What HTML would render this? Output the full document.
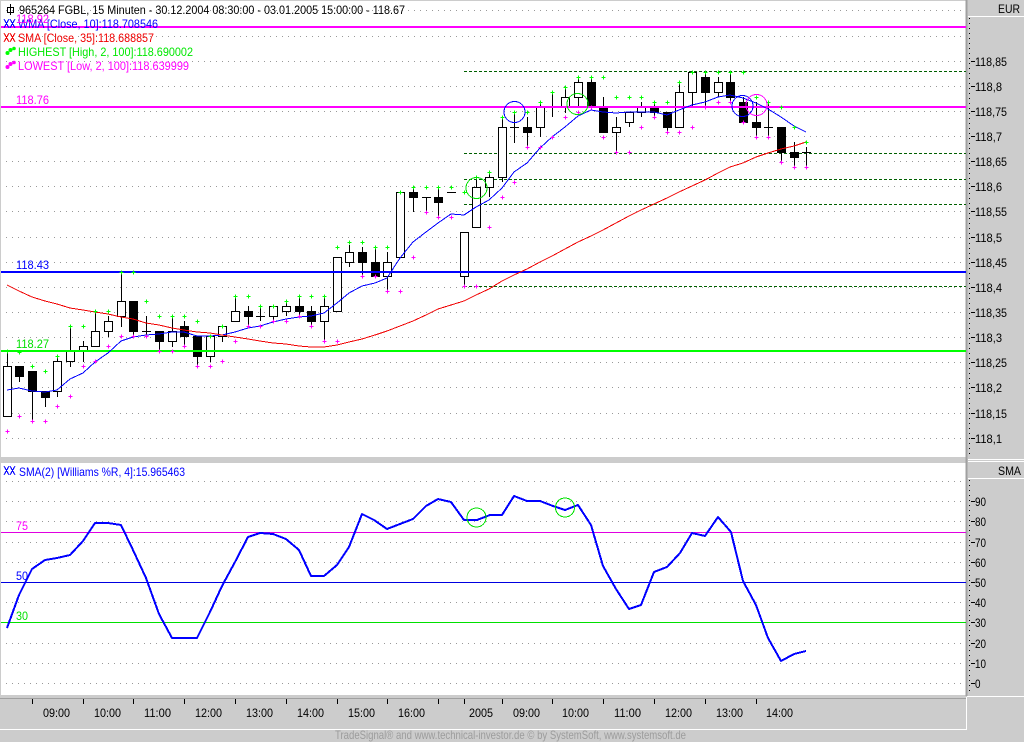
<!DOCTYPE html>
<html><head><meta charset="utf-8"><title>FGBL 15 Minuten</title>
<style>
html,body{margin:0;padding:0;background:#ccc;width:1024px;height:742px;overflow:hidden}
svg{display:block}
text{font-family:"Liberation Sans",sans-serif;font-size:12px}
.ax text{fill:#000}
</style></head><body>
<svg width="1024" height="742" viewBox="0 0 1024 742" xmlns="http://www.w3.org/2000/svg">
<rect width="1024" height="742" fill="#ccc"/>
<rect x="1" y="1" width="965" height="456" fill="#fff"/>
<rect x="1" y="463" width="965" height="232" fill="#fff"/>
<g shape-rendering="crispEdges">
<!-- frame -->
<path d="M966.5 0V696" stroke="#a0a0a0" stroke-width="2" fill="none"/>
<path d="M968 16.5H1024M968 459.5H1024M968 461.5H1024M968 478.5H1024M967 696.5H1024M0 729.5H967M966.5 697V729" stroke="#fff" fill="none"/>
<path d="M0 698.5H966" stroke="#a0a0a0" fill="none"/>
<!-- grid -->
<path stroke="#999" stroke-dasharray="1 5" fill="none" d="M6 10.5H966M6 36.5H966M6 61.5H966M6 86.5H966M6 111.5H966M6 136.5H966M6 161.5H966M6 186.5H966M6 211.5H966M6 237.5H966M6 262.5H966M6 287.5H966M6 312.5H966M6 337.5H966M6 362.5H966M6 387.5H966M6 413.5H966M6 438.5H966M6 481.5H966M6 501.5H966M6 521.5H966M6 542.5H966M6 562.5H966M6 582.5H966M6 602.5H966M6 622.5H966M6 643.5H966M6 663.5H966M6 683.5H966"/>
<!-- dashed support -->
<path stroke="#006000" stroke-dasharray="3 2" fill="none" d="M464 71.5H966M464 153.5H966M464 179.5H966M464 204.5H966M464 286.5H966"/>
<!-- wicks -->
<path stroke="#000" fill="none" d="M7.5 352V366M19.5 366V382M32.5 371V421M45.5 391V407M57.5 357V397M70.5 326V367M83.5 341V362M95.5 311V346M108.5 316V337M121.5 272V327M133.5 301V336M146.5 316V336M142 331.5H151M159.5 331V351M172.5 316V347M184.5 321V347M197.5 336V366M210.5 336V362M222.5 326V342M235.5 296V321M248.5 306V326M260.5 306V321M256 316.5H265M273.5 306V321M286.5 301V316M299.5 296V316M311.5 306V326M324.5 296V341M337.5 257V311M349.5 245V267M362.5 247V277M375.5 247V276M387.5 252V291M400.5 192V257M413.5 187V212M426.5 197V212M422 197.5H431M438.5 187V217M447 192.5H456M464.5 232V286M476.5 177V227M489.5 172V197M502.5 117V182M514.5 112V143M510 127.5H519M527.5 117V147M540.5 102V137M552.5 92V117M548 107.5H557M565.5 87V113M578.5 77V107M591.5 77V107M603.5 97V132M616.5 117V152M629.5 112V127M641.5 102V117M654.5 102V117M667.5 112V132M679.5 82V127M692.5 72V107M705.5 72V107M718.5 77V97M730.5 72V102M743.5 97V122M756.5 102V137M768.5 102V137M764 127.5H773M781.5 127V162M794.5 142V167M806.5 147V167M802 152.5H811"/>
<!-- white bodies -->
<path stroke="#000" fill="#fff" d="M3.5 366.5h8v50h-8zM53.5 361.5h8v30h-8zM66.5 351.5h8v10h-8zM79.5 346.5h8v5h-8zM91.5 331.5h8v15h-8zM104.5 321.5h8v10h-8zM117.5 301.5h8v15h-8zM168.5 331.5h8v10h-8zM206.5 336.5h8v20h-8zM218.5 326.5h8v10h-8zM231.5 311.5h8v10h-8zM269.5 306.5h8v10h-8zM282.5 306.5h8v5h-8zM320.5 306.5h8v15h-8zM333.5 257.5h8v54h-8zM345.5 252.5h8v10h-8zM383.5 262.5h8v14h-8zM396.5 192.5h8v65h-8zM460.5 232.5h8v44h-8zM472.5 187.5h8v40h-8zM485.5 177.5h8v10h-8zM498.5 127.5h8v50h-8zM536.5 107.5h8v20h-8zM561.5 97.5h8v10h-8zM574.5 82.5h8v15h-8zM612.5 127.5h8v5h-8zM625.5 112.5h8v10h-8zM637.5 107.5h8v5h-8zM675.5 92.5h8v35h-8zM688.5 72.5h8v20h-8zM714.5 82.5h8v10h-8z"/>
<!-- black bodies -->
<path stroke="#000" fill="#000" d="M15.5 366.5h8v10h-8zM28.5 371.5h8v20h-8zM41.5 391.5h8v6h-8zM129.5 301.5h8v30h-8zM155.5 331.5h8v10h-8zM180.5 326.5h8v10h-8zM193.5 336.5h8v20h-8zM244.5 311.5h8v5h-8zM295.5 306.5h8v5h-8zM307.5 311.5h8v10h-8zM358.5 252.5h8v10h-8zM371.5 262.5h8v14h-8zM409.5 192.5h8v5h-8zM434.5 197.5h8v5h-8zM523.5 127.5h8v5h-8zM587.5 82.5h8v25h-8zM599.5 107.5h8v25h-8zM650.5 107.5h8v5h-8zM663.5 112.5h8v15h-8zM701.5 77.5h8v15h-8zM726.5 82.5h8v15h-8zM739.5 102.5h8v20h-8zM752.5 122.5h8v5h-8zM777.5 127.5h8v25h-8zM790.5 152.5h8v5h-8z"/>
<!-- horizontal level lines -->
<path stroke="#ff00ff" stroke-width="2" fill="none" d="M1 27H966M1 107H966"/>
<path stroke="#0000ff" stroke-width="2" fill="none" d="M1 272H966"/>
<path stroke="#00ff00" stroke-width="2" fill="none" d="M1 351H966"/>
<path stroke="#e000e0" fill="none" d="M1 532.5H966"/>
<path stroke="#0000e0" fill="none" d="M1 582.5H966"/>
<path stroke="#00e000" fill="none" d="M1 622.5H966"/>
<!-- WMA -->
<polyline fill="none" stroke="#0000ff" points="7,390 19,388 32,391 45,392 57,390 70,379 83,373 95,362 108,353 121,341 133,337 146,335 159,334 172,332 184,332 197,336 210,336 222,335 235,332 248,328 260,326 273,322 286,319 299,317 311,316 324,313 337,303 349,293 362,286 375,283 387,278 400,258 413,242 426,232 438,223 451,214 464,215 476,207 489,200 502,188 514,172 527,163 540,148 552,137 565,127 578,116 591,110 603,112 616,113 629,112 641,112 654,112 667,115 679,110 692,105 705,102 718,97 730,95 743,98 756,103 768,109 781,117 794,126 806,132"/>
<!-- SMA -->
<polyline fill="none" stroke="#f00000" points="7,285 19,291 32,297 45,301 57,304 70,308 83,310 95,312 108,314 121,317 133,319 146,323 159,325 172,328 184,330 197,332 210,333 222,335 235,337 248,339 260,341 273,343 286,344 299,346 311,347 324,347 337,345 349,342 362,339 375,335 387,331 400,326 413,321 426,315 438,309 451,305 464,301 476,295 489,289 502,281 514,275 527,269 540,262 552,256 565,249 578,242 591,236 603,230 616,223 629,216 641,210 654,204 667,198 679,192 692,186 705,180 718,173 730,167 743,163 756,157 768,153 781,149 794,146 806,142"/>
<!-- markers -->
<path stroke="#00ff00" stroke-linecap="square" fill="none" d="M6 351.5h3M7.5 350v3M18 352.5h3M19.5 351v3M31 366.5h3M32.5 365v3M44 371.5h3M45.5 370v3M56 356.5h3M57.5 355v3M69 326.5h3M70.5 325v3M82 326.5h3M83.5 325v3M94 311.5h3M95.5 310v3M107 311.5h3M108.5 310v3M120 272.5h3M121.5 271v3M132 272.5h3M133.5 271v3M145 301.5h3M146.5 300v3M158 316.5h3M159.5 315v3M171 316.5h3M172.5 315v3M183 316.5h3M184.5 315v3M196 321.5h3M197.5 320v3M209 336.5h3M210.5 335v3M221 326.5h3M222.5 325v3M234 296.5h3M235.5 295v3M247 296.5h3M248.5 295v3M259 306.5h3M260.5 305v3M272 306.5h3M273.5 305v3M285 301.5h3M286.5 300v3M298 296.5h3M299.5 295v3M310 296.5h3M311.5 295v3M323 296.5h3M324.5 295v3M336 247.5h3M337.5 246v3M348 242.5h3M349.5 241v3M361 242.5h3M362.5 241v3M374 247.5h3M375.5 246v3M386 247.5h3M387.5 246v3M399 192.5h3M400.5 191v3M412 187.5h3M413.5 186v3M425 187.5h3M426.5 186v3M437 187.5h3M438.5 186v3M450 187.5h3M451.5 186v3M463 192.5h3M464.5 191v3M475 177.5h3M476.5 176v3M488 172.5h3M489.5 171v3M501 117.5h3M502.5 116v3M513 112.5h3M514.5 111v3M526 112.5h3M527.5 111v3M539 102.5h3M540.5 101v3M551 92.5h3M552.5 91v3M564 87.5h3M565.5 86v3M577 77.5h3M578.5 76v3M590 77.5h3M591.5 76v3M602 77.5h3M603.5 76v3M615 97.5h3M616.5 96v3M628 97.5h3M629.5 96v3M640 97.5h3M641.5 96v3M653 102.5h3M654.5 101v3M666 102.5h3M667.5 101v3M678 82.5h3M679.5 81v3M691 72.5h3M692.5 71v3M704 72.5h3M705.5 71v3M717 72.5h3M718.5 71v3M729 72.5h3M730.5 71v3M742 72.5h3M743.5 71v3M755 97.5h3M756.5 96v3M767 102.5h3M768.5 101v3M780 107.5h3M781.5 106v3M793 127.5h3M794.5 126v3M805 142.5h3M806.5 141v3"/>
<path stroke="#ff00ff" stroke-linecap="square" fill="none" d="M6 431.5h3M7.5 430v3M18 416.5h3M19.5 415v3M31 421.5h3M32.5 420v3M44 421.5h3M45.5 420v3M56 406.5h3M57.5 405v3M69 396.5h3M70.5 395v3M82 366.5h3M83.5 365v3M94 361.5h3M95.5 360v3M107 346.5h3M108.5 345v3M120 336.5h3M121.5 335v3M132 336.5h3M133.5 335v3M145 336.5h3M146.5 335v3M158 351.5h3M159.5 350v3M171 351.5h3M172.5 350v3M183 346.5h3M184.5 345v3M196 366.5h3M197.5 365v3M209 366.5h3M210.5 365v3M221 361.5h3M222.5 360v3M234 341.5h3M235.5 340v3M247 326.5h3M248.5 325v3M259 326.5h3M260.5 325v3M272 321.5h3M273.5 320v3M285 321.5h3M286.5 320v3M298 316.5h3M299.5 315v3M310 326.5h3M311.5 325v3M323 341.5h3M324.5 340v3M336 341.5h3M337.5 340v3M361 276.5h3M362.5 275v3M374 276.5h3M375.5 275v3M386 291.5h3M387.5 290v3M399 291.5h3M400.5 290v3M412 257.5h3M413.5 256v3M425 212.5h3M426.5 211v3M437 217.5h3M438.5 216v3M450 217.5h3M451.5 216v3M463 286.5h3M464.5 285v3M475 286.5h3M476.5 285v3M488 227.5h3M489.5 226v3M501 197.5h3M502.5 196v3M513 182.5h3M514.5 181v3M526 147.5h3M527.5 146v3M539 147.5h3M540.5 146v3M551 137.5h3M552.5 136v3M564 117.5h3M565.5 116v3M577 112.5h3M578.5 111v3M590 107.5h3M591.5 106v3M602 137.5h3M603.5 136v3M615 152.5h3M616.5 151v3M628 152.5h3M629.5 151v3M640 127.5h3M641.5 126v3M653 117.5h3M654.5 116v3M666 132.5h3M667.5 131v3M678 132.5h3M679.5 131v3M691 127.5h3M692.5 126v3M704 107.5h3M705.5 106v3M717 102.5h3M718.5 101v3M729 102.5h3M730.5 101v3M742 122.5h3M743.5 121v3M755 137.5h3M756.5 136v3M767 137.5h3M768.5 136v3M780 162.5h3M781.5 161v3M793 167.5h3M794.5 166v3M805 167.5h3M806.5 166v3"/>
<!-- Williams -->
<polyline fill="none" stroke="#0000ff" stroke-width="2" stroke-linejoin="round" points="7,628 19,595 32,569 45,560 57,558 70,555 83,541 95,523 108,523 121,525 133,550 146,578 159,614 172,638 184,638 197,638 210,612 222,586 235,562 248,537 260,533 273,534 286,539 299,550 311,576 324,576 337,565 349,547 362,514 374,520 387,529 400,524 413,519 426,506 438,499 451,502 464,520 477,520 490,515 502,515 514,496 527,501 540,501 553,506 565,510 578,505 591,525 603,566 616,589 629,609 641,605 654,572 667,567 680,553 692,533 705,536 718,517 731,532 743,581 756,605 768,638 781,661 794,654 806,651"/>
<!-- circles -->
<g fill="none">
<circle cx="514.5" cy="112" r="10.5" stroke="#0000ff"/>
<circle cx="476.5" cy="188" r="10.5" stroke="#00e000"/>
<circle cx="577.5" cy="104" r="10.5" stroke="#00e000"/>
<circle cx="742.5" cy="106" r="10.5" stroke="#0000ff"/>
<circle cx="756.5" cy="105" r="10.5" stroke="#ff00ff"/>
<circle cx="476.5" cy="517.5" r="9.5" stroke="#00e000"/>
<circle cx="565" cy="507.5" r="9.5" stroke="#00e000"/>
</g>
<!-- axis dots / ticks -->
<path stroke="#000" stroke-dasharray="1 4" fill="none" d="M969.5 18V457M969.5 480V695"/>
<path stroke="#000" fill="none" d="M971 61.5h4M971 86.5h4M971 111.5h4M971 136.5h4M971 161.5h4M971 186.5h4M971 211.5h4M971 237.5h4M971 262.5h4M971 287.5h4M971 312.5h4M971 337.5h4M971 362.5h4M971 387.5h4M971 413.5h4M971 438.5h4M971 501.5h4M971 521.5h4M971 542.5h4M971 562.5h4M971 582.5h4M971 602.5h4M971 622.5h4M971 643.5h4M971 663.5h4M971 683.5h4"/>
<path stroke="#000" fill="none" d="M32.5 699v5M83.5 699v5M133.5 699v5M184.5 699v5M235.5 699v5M286.5 699v5M337.5 699v5M387.5 699v5M438.5 699v5M464.5 699v5M502.5 699v5M552.5 699v5M603.5 699v5M654.5 699v5M705.5 699v5M756.5 699v5"/>
<!-- legend icons -->
<path stroke="#000" fill="none" d="M10.5 4V15M7.5 7.5h6v5h-6z"/>
<path stroke="#0000ff" fill="none" d="M4 19l5 9M9 19l-5 9M10 19l5 9M15 19l-5 9M4 466l5 9M9 466l-5 9M10 466l5 9M15 466l-5 9"/>
<path stroke="#f00000" fill="none" d="M4 33l5 9M9 33l-5 9M10 33l5 9M15 33l-5 9"/>
</g>
<g fill="#00ff00"><circle cx="7.5" cy="53" r="2"/><circle cx="10.5" cy="50" r="2"/><circle cx="14" cy="48.5" r="1.8"/></g>
<g fill="#ff00ff"><circle cx="7.5" cy="67" r="2"/><circle cx="10.5" cy="64" r="2"/><circle cx="14" cy="62.5" r="1.8"/></g>
<!-- legend text -->
<text x="19" y="14" fill="#000" textLength="386" lengthAdjust="spacingAndGlyphs">965264 FGBL, 15 Minuten - 30.12.2004 08:30:00 - 03.01.2005 15:00:00 - 118.67</text>
<text x="18" y="28" fill="#0000ff" textLength="140" lengthAdjust="spacingAndGlyphs">WMA [Close, 10]:118.708546</text>
<text x="18" y="42" fill="#f00000" textLength="136" lengthAdjust="spacingAndGlyphs">SMA [Close, 35]:118.688857</text>
<text x="18" y="56" fill="#00e800" textLength="175" lengthAdjust="spacingAndGlyphs">HIGHEST [High, 2, 100]:118.690002</text>
<text x="18" y="70" fill="#ff00ff" textLength="171" lengthAdjust="spacingAndGlyphs">LOWEST [Low, 2, 100]:118.639999</text>
<text x="19" y="476" fill="#0000ff" textLength="166" lengthAdjust="spacingAndGlyphs">SMA(2) [Williams %R, 4]:15.965463</text>
<!-- level labels -->
<text x="16" y="23" fill="#ff00ff" textLength="33" lengthAdjust="spacingAndGlyphs">118.92</text>
<text x="16" y="104" fill="#ff00ff" textLength="33" lengthAdjust="spacingAndGlyphs">118.76</text>
<text x="16" y="269" fill="#0000ff" textLength="33" lengthAdjust="spacingAndGlyphs">118.43</text>
<text x="16" y="348" fill="#00e000" textLength="33" lengthAdjust="spacingAndGlyphs">118.27</text>
<text x="16" y="530" fill="#ff00ff" textLength="12" lengthAdjust="spacingAndGlyphs">75</text>
<text x="16" y="580" fill="#0000ff" textLength="12" lengthAdjust="spacingAndGlyphs">50</text>
<text x="16" y="620" fill="#00e000" textLength="12" lengthAdjust="spacingAndGlyphs">30</text>
<!-- price axis -->
<g class="ax">
<text x="998" y="13" textLength="22" lengthAdjust="spacingAndGlyphs">EUR</text>
<text x="975" y="66" textLength="32" lengthAdjust="spacingAndGlyphs">118,85</text><text x="975" y="91" textLength="27" lengthAdjust="spacingAndGlyphs">118,8</text><text x="975" y="116" textLength="32" lengthAdjust="spacingAndGlyphs">118,75</text><text x="975" y="141" textLength="27" lengthAdjust="spacingAndGlyphs">118,7</text><text x="975" y="166" textLength="32" lengthAdjust="spacingAndGlyphs">118,65</text><text x="975" y="191" textLength="27" lengthAdjust="spacingAndGlyphs">118,6</text><text x="975" y="216" textLength="32" lengthAdjust="spacingAndGlyphs">118,55</text><text x="975" y="242" textLength="27" lengthAdjust="spacingAndGlyphs">118,5</text><text x="975" y="267" textLength="32" lengthAdjust="spacingAndGlyphs">118,45</text><text x="975" y="292" textLength="27" lengthAdjust="spacingAndGlyphs">118,4</text><text x="975" y="317" textLength="32" lengthAdjust="spacingAndGlyphs">118,35</text><text x="975" y="342" textLength="27" lengthAdjust="spacingAndGlyphs">118,3</text><text x="975" y="367" textLength="32" lengthAdjust="spacingAndGlyphs">118,25</text><text x="975" y="392" textLength="27" lengthAdjust="spacingAndGlyphs">118,2</text><text x="975" y="418" textLength="32" lengthAdjust="spacingAndGlyphs">118,15</text><text x="975" y="443" textLength="27" lengthAdjust="spacingAndGlyphs">118,1</text>
<text x="998" y="475" textLength="23" lengthAdjust="spacingAndGlyphs">SMA</text>
<text x="975" y="506" textLength="11" lengthAdjust="spacingAndGlyphs">90</text><text x="975" y="526" textLength="11" lengthAdjust="spacingAndGlyphs">80</text><text x="975" y="547" textLength="11" lengthAdjust="spacingAndGlyphs">70</text><text x="975" y="567" textLength="11" lengthAdjust="spacingAndGlyphs">60</text><text x="975" y="587" textLength="11" lengthAdjust="spacingAndGlyphs">50</text><text x="975" y="607" textLength="11" lengthAdjust="spacingAndGlyphs">40</text><text x="975" y="627" textLength="11" lengthAdjust="spacingAndGlyphs">30</text><text x="975" y="648" textLength="11" lengthAdjust="spacingAndGlyphs">20</text><text x="975" y="668" textLength="11" lengthAdjust="spacingAndGlyphs">10</text><text x="975" y="688" textLength="5.5" lengthAdjust="spacingAndGlyphs">0</text>
<!-- time axis -->
<text x="43" y="717" textLength="27" lengthAdjust="spacingAndGlyphs">09:00</text><text x="94" y="717" textLength="27" lengthAdjust="spacingAndGlyphs">10:00</text><text x="144" y="717" textLength="27" lengthAdjust="spacingAndGlyphs">11:00</text><text x="195" y="717" textLength="27" lengthAdjust="spacingAndGlyphs">12:00</text><text x="246" y="717" textLength="27" lengthAdjust="spacingAndGlyphs">13:00</text><text x="297" y="717" textLength="27" lengthAdjust="spacingAndGlyphs">14:00</text><text x="348" y="717" textLength="27" lengthAdjust="spacingAndGlyphs">15:00</text><text x="398" y="717" textLength="27" lengthAdjust="spacingAndGlyphs">16:00</text><text x="469" y="717" textLength="24" lengthAdjust="spacingAndGlyphs">2005</text><text x="513" y="717" textLength="27" lengthAdjust="spacingAndGlyphs">09:00</text><text x="562" y="717" textLength="27" lengthAdjust="spacingAndGlyphs">10:00</text><text x="614" y="717" textLength="27" lengthAdjust="spacingAndGlyphs">11:00</text><text x="665" y="717" textLength="27" lengthAdjust="spacingAndGlyphs">12:00</text><text x="716" y="717" textLength="27" lengthAdjust="spacingAndGlyphs">13:00</text><text x="766" y="717" textLength="27" lengthAdjust="spacingAndGlyphs">14:00</text>
</g>
<text x="335" y="739" fill="#9c9c9c" style="font-size:12px" textLength="351" lengthAdjust="spacingAndGlyphs">TradeSignal® and www.technical-investor.de © by SystemSoft, www.systemsoft.de</text>
</svg>
</body></html>
